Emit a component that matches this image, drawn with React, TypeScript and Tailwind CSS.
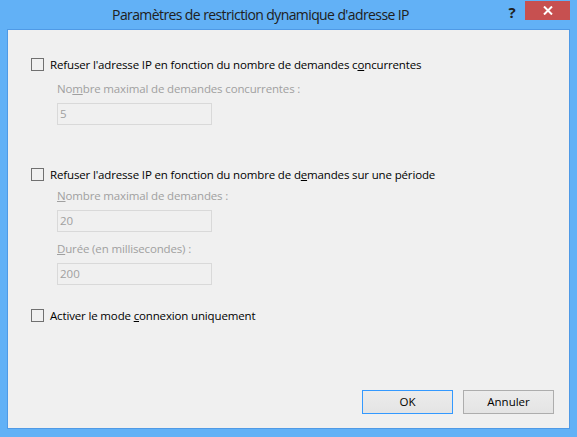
import React from "react";

const font = { fontFamily: '"Segoe UI", "Open Sans", "Noto Sans", sans-serif' };

function Check({ children }: { children: React.ReactNode }) {
  return (
    <div className="flex h-[13px] items-center">
      <div className="h-[13px] w-[13px] border border-[#707070] bg-[#f0f0f0]" />
      <div className="ml-[6px] whitespace-nowrap text-[11.5px] leading-[13px] tracking-[-0.15px] text-black">
        {children}
      </div>
    </div>
  );
}

function Field({ label, value }: { label: React.ReactNode; value: string }) {
  return (
    <div className="ml-[26px] flex flex-col">
      <div className="h-[16px] whitespace-nowrap text-[11.5px] leading-[16px] tracking-[-0.15px] text-[#a0a0a0]">
        {label}
      </div>
      <div className="mt-[6px] flex h-[22px] w-[155px] items-center border border-[#d9d9d9] bg-[#f0f0f0] px-[2px] text-[11.5px] text-[#a0a0a0]">
        {value}
      </div>
    </div>
  );
}

export default function App() {
  return (
    <div className="h-[437px] w-[577px] bg-[#62b1f6]" style={font}>
      {/* TITLE BAR */}
      <div className="flex h-[29px] items-start">
        <div className="flex flex-1 justify-center pl-[22px] pt-[5px] text-[14px] leading-[20px] tracking-[-0.6px] text-[#202020]">
          Paramètres de restriction dynamique d'adresse IP
        </div>
        <div className="flex w-[26px] justify-center pt-[4px] text-[15px] font-bold leading-[16px] text-[#202020]">
          ?
        </div>
        <div className="mr-[7px] mt-[1px] flex h-[19px] w-[45px] items-center justify-center bg-[#c75050]">
          <svg width="10" height="9" viewBox="0 0 10 9">
            <path d="M1 0.5 L9 8.5 M9 0.5 L1 8.5" stroke="#fff" strokeWidth="2" />
          </svg>
        </div>
      </div>

      {/* CLIENT AREA */}
      <div className="mx-[7px] h-[400px] border border-[#4f9ae6] bg-[#f0f0f0]">
        <div className="flex h-full flex-col px-[23px] pt-[28px]">
          <Check>
            Refuser l'adresse IP en fonction du nombre de demandes c<u>o</u>ncurrentes
          </Check>
          <div className="mt-[10px]">
            <Field
              label={
                <>
                  No<u>m</u>bre maximal de demandes concurrentes :
                </>
              }
              value="5"
            />
          </div>

          <div className="mt-[43px]">
            <Check>
              Refuser l'adresse IP en fonction du nombre de d<u>e</u>mandes sur une période
            </Check>
          </div>
          <div className="mt-[7px]">
            <Field
              label={
                <>
                  <u>N</u>ombre maximal de demandes :
                </>
              }
              value="20"
            />
          </div>
          <div className="mt-[9px]">
            <Field
              label={
                <>
                  <u>D</u>urée (en millisecondes) :
                </>
              }
              value="200"
            />
          </div>

          <div className="mt-[24px]">
            <Check>
              Activer le mode <u>c</u>onnexion uniquement
            </Check>
          </div>

          <div className="mr-[-8px] mt-auto flex justify-end gap-[10px] pb-[14px]">
            <button className="h-[24px] w-[91px] border border-[#3399ff] bg-gradient-to-b from-[#ececec] to-[#e4e4e4] text-[11.5px] text-black">
              OK
            </button>
            <button className="h-[24px] w-[91px] border border-[#adadad] bg-gradient-to-b from-[#ececec] to-[#e4e4e4] text-[11.5px] text-black">
              Annuler
            </button>
          </div>
        </div>
      </div>
    </div>
  );
}
